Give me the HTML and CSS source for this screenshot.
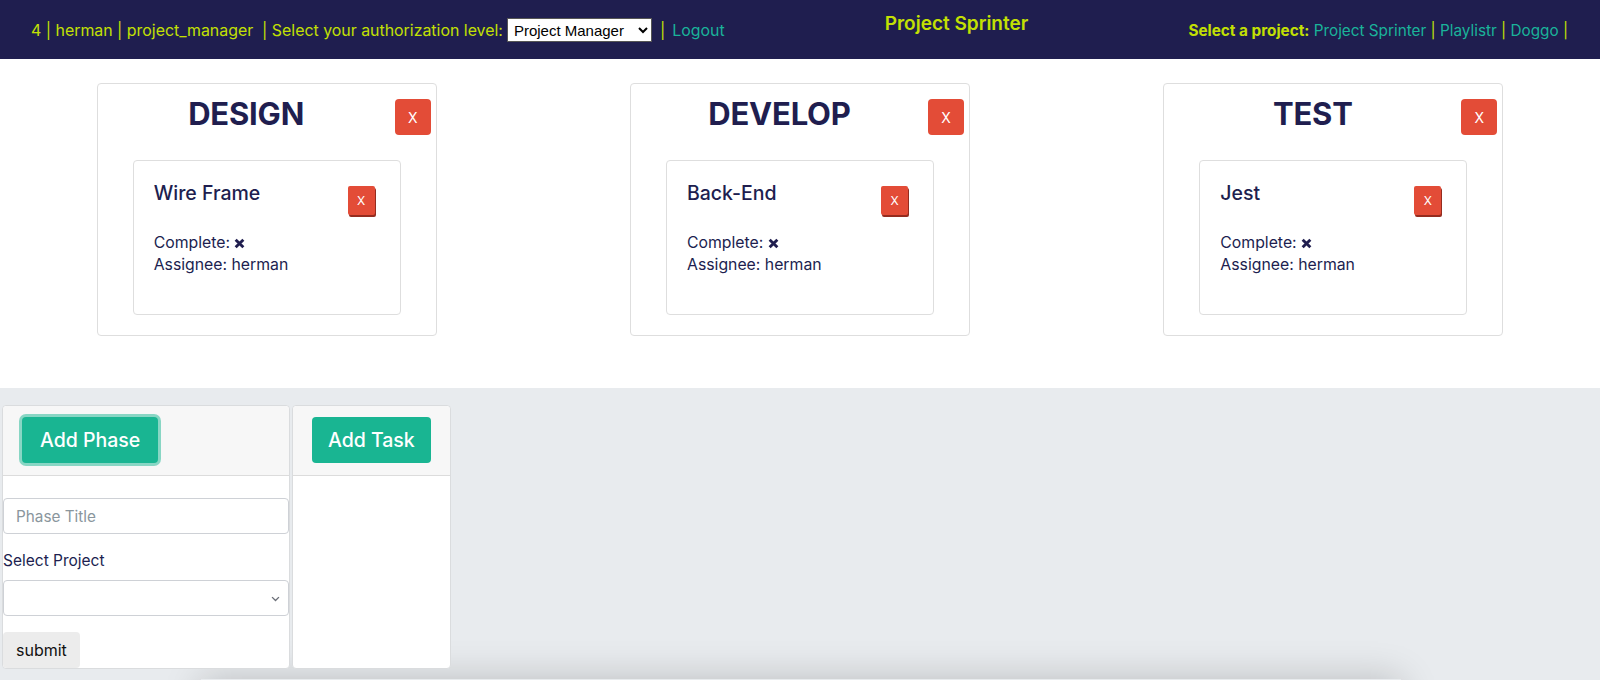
FILE: index.html
```html
<!DOCTYPE html>
<html lang="en">
<head>
<meta charset="utf-8">
<title>Project Sprinter</title>
<link rel="stylesheet" href="styles.css">
</head>
<body>
<nav class="topbar">
  <div class="nav-left">
    <span class="lime">4 | herman | project_manager &nbsp;| Select your authorization level:</span>
    <select class="auth-select"><option>Project Manager</option></select>
    <span class="lime pipe">|</span>
    <a class="teal" href="#">Logout</a>
  </div>
  <div class="nav-title">Project Sprinter</div>
  <div class="nav-right"><b class="lime">Select a project:</b> <a class="teal" href="#">Project Sprinter</a><span class="lime"> | </span><a class="teal" href="#">Playlistr</a><span class="lime"> | </span><a class="teal" href="#">Doggo</a><span class="lime"> |</span></div>
</nav>

<main class="board">
  <section class="phase">
    <div class="phase-head"><h1>DESIGN</h1><button class="btn-x big">X</button></div>
    <div class="task">
      <div class="task-head"><h5>Wire Frame</h5><button class="btn-x small">X</button></div>
      <p>Complete: <svg class="cross" viewBox="0 0 10 10"><path d="M1.5 1.5 L8.5 8.5 M8.5 1.5 L1.5 8.5"/></svg><br>Assignee: herman</p>
    </div>
  </section>
  <section class="phase">
    <div class="phase-head"><h1>DEVELOP</h1><button class="btn-x big">X</button></div>
    <div class="task">
      <div class="task-head"><h5>Back-End</h5><button class="btn-x small">X</button></div>
      <p>Complete: <svg class="cross" viewBox="0 0 10 10"><path d="M1.5 1.5 L8.5 8.5 M8.5 1.5 L1.5 8.5"/></svg><br>Assignee: herman</p>
    </div>
  </section>
  <section class="phase">
    <div class="phase-head"><h1>TEST</h1><button class="btn-x big">X</button></div>
    <div class="task">
      <div class="task-head"><h5>Jest</h5><button class="btn-x small">X</button></div>
      <p>Complete: <svg class="cross" viewBox="0 0 10 10"><path d="M1.5 1.5 L8.5 8.5 M8.5 1.5 L1.5 8.5"/></svg><br>Assignee: herman</p>
    </div>
  </section>
</main>

<div class="workspace">
  <div class="panels">
    <div class="panel phase-panel">
      <div class="panel-head"><button class="btn-green focused">Add Phase</button></div>
      <div class="panel-body">
        <input class="field" type="text" placeholder="Phase Title">
        <label class="field-label">Select Project</label>
        <div class="select-wrap">
          <select class="field select-field"><option></option></select>
          <svg class="chevron" viewBox="0 0 16 16"><path d="M3 6 L8 11 L13 6"/></svg>
        </div>
        <button class="btn-submit">submit</button>
      </div>
    </div>
    <div class="panel task-panel">
      <div class="panel-head"><button class="btn-green">Add Task</button></div>
      <div class="panel-body"></div>
    </div>
  </div>
  <div class="below"></div>
</div>
</body>
</html>
```

FILE: styles.css
```css
* { box-sizing: border-box; }

html, body {
  margin: 0;
  padding: 0;
}

body {
  font-family: Inter, "Noto Sans", sans-serif;
  color: #201e4f;
  background: #e8ebee;
  overflow: hidden;
}

a { text-decoration: none; }

.lime { color: #c3e003; }
.teal { color: #1ab39a; }

/* ---------- top bar ---------- */
.topbar {
  height: 59px;
  background: #1f1e4f;
  display: flex;
  justify-content: space-between;
  align-items: center;
  padding: 0 32px 0 31px;
}

.nav-left {
  display: flex;
  align-items: center;
  margin-top: 1px;
  white-space: pre;
  font-size: 15.9px;
}

.auth-select {
  margin-left: 4px;
  width: 145px;
  height: 24px;
  font-family: "Liberation Sans", Arial, sans-serif;
  font-size: 15px;
  color: #000;
  background: #fff;
  border: 1px solid #555;
  border-radius: 0;
  padding: 0 2px;
}

.pipe { margin: 0 7px 0 8px; }

.nav-title {
  color: #c3e003;
  font-size: 19px;
  font-weight: 600;
  margin-bottom: 13px;
}

.nav-right {
  margin-top: 1px;
  white-space: nowrap;
  font-size: 15.3px;
}

.nav-right b { font-weight: 700; }

/* ---------- board ---------- */
.board {
  background: #fff;
  height: 329px;
  display: grid;
  grid-template-columns: repeat(3, 1fr);
  align-items: start;
  padding-top: 24px;
}

.phase {
  justify-self: center;
  width: 340px;
  border: 1px solid #dedede;
  border-radius: 4px;
  padding: 15px 5px 20px 0;
}

.phase-head {
  display: flex;
  align-items: flex-start;
}

.phase-head h1 {
  flex: 1;
  margin: -3px 0 0;
  text-align: center;
  font-size: 31px;
  font-weight: 700;
  line-height: 36px;
  letter-spacing: -0.2px;
}

.btn-x {
  border: none;
  color: #fff;
  background: #e34c37;
  font-family: Inter, sans-serif;
  cursor: pointer;
  padding: 0;
}

.btn-x.big {
  width: 36px;
  height: 36px;
  border-radius: 4px;
  font-size: 14px;
}

.btn-x.small {
  width: 27px;
  height: 29px;
  border-radius: 2px;
  font-size: 12px;
  box-shadow: 1px 2px 0 #952c1f;
  margin-top: 5px;
}

.task {
  margin: 25px 30px 0 35px;
  border: 1px solid #dedede;
  border-radius: 4px;
  padding: 20px 25px 16px 20px;
}

.task-head {
  display: flex;
  justify-content: space-between;
  align-items: flex-start;
}

.task-head h5 {
  margin: 0;
  font-size: 19.5px;
  font-weight: 500;
  line-height: 24px;
}

.task p {
  margin: 17px 0 22px;
  font-size: 15.8px;
  line-height: 22px;
}

.cross {
  width: 11px;
  height: 11px;
  vertical-align: -1px;
}

.cross path {
  stroke: #201e4f;
  stroke-width: 2.6;
  fill: none;
}

/* ---------- workspace ---------- */
.workspace {
  background: #e8ebee;
  padding: 17px 0 0 2px;
}

.panels {
  display: flex;
  gap: 2px;
  align-items: stretch;
}

.panel {
  background: #fff;
  border: 1px solid #dadcde;
  border-radius: 4px;
  display: flex;
  flex-direction: column;
}

.phase-panel { width: 288px; }
.task-panel { width: 159px; }

.panel-head {
  background: #f7f7f7;
  border-bottom: 1px solid #dcdcdc;
  padding: 11px 19px 12px;
  border-radius: 4px 4px 0 0;
  white-space: nowrap;
}

.btn-green {
  height: 46px;
  border: none;
  border-radius: 4px;
  background: #19b592;
  color: #fff;
  font-family: Inter, sans-serif;
  font-size: 19.5px;
  font-weight: 500;
  padding: 0 18px;
  white-space: nowrap;
  cursor: pointer;
}

.task-panel .btn-green { padding: 0 16px; }

.btn-green.focused {
  box-shadow: 0 0 0 3px rgba(25, 181, 146, 0.5);
}

.panel-body {
  flex: 1;
  padding-top: 22px;
}

.field {
  display: block;
  width: 100%;
  height: 36px;
  border: 1px solid #ced1d6;
  border-radius: 4px;
  padding: 0 12px;
  font-family: Inter, sans-serif;
  font-size: 15.3px;
  color: #201e4f;
  background: #fff;
}

.field::placeholder { color: #8a969d; }

.field-label {
  display: block;
  margin: 15px 0 7px;
  font-size: 15.5px;
  line-height: 24px;
}

.select-wrap { position: relative; }

.select-field {
  appearance: none;
  -webkit-appearance: none;
}

.chevron {
  position: absolute;
  right: 8px;
  top: 13px;
  width: 11px;
  height: 11px;
}

.chevron path {
  stroke: #6b6f78;
  stroke-width: 2;
  fill: none;
}

.btn-submit {
  margin-top: 16px;
  height: 36px;
  border: none;
  border-radius: 4px;
  background: #ececec;
  color: #111;
  font-family: Inter, sans-serif;
  font-size: 16px;
  padding: 0 13px;
  display: block;
}

.below {
  width: 1200px;
  height: 120px;
  margin: 10px auto 0;
  background: #e8ebee;
  box-shadow: 0 0 36px rgba(0, 0, 0, 0.2);
}
```
